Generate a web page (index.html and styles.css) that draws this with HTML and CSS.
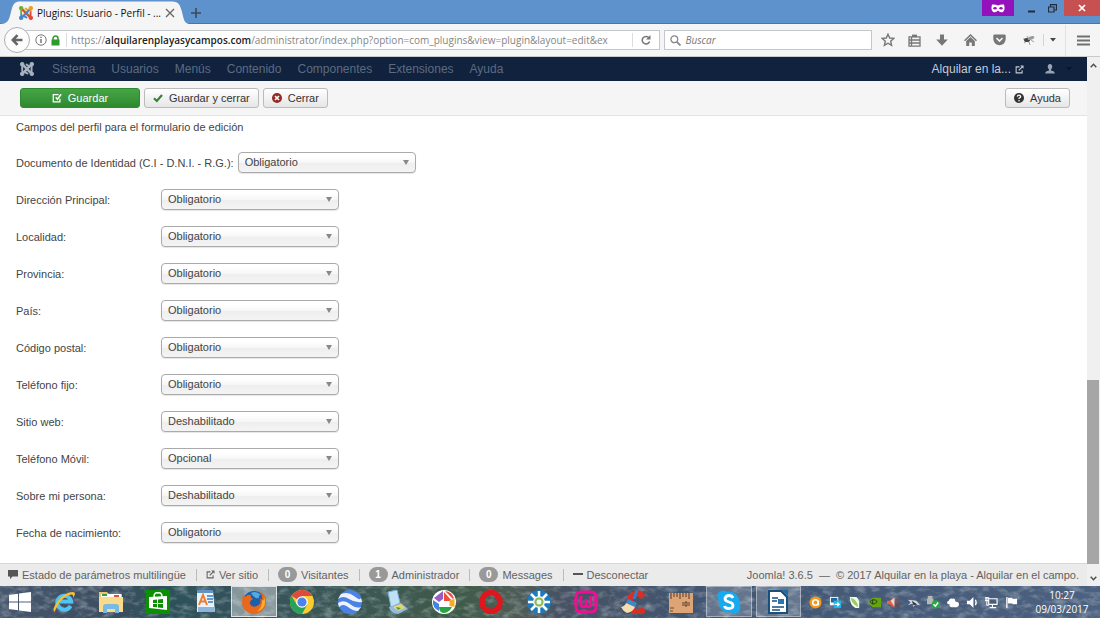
FILE: index.html
```html
<!DOCTYPE html>
<html lang="es">
<head>
  <meta charset="UTF-8">
  <meta name="viewport" content="width=device-width, initial-scale=1.0">
  <title>Plugins: Usuario - Perfil</title>
  <link rel="stylesheet" href="styles.css">
</head>
<body>
  <!-- Shared shapes -->
  <svg class="defs" aria-hidden="true">
    <symbol id="joomla" viewBox="0 0 16 16">
      <g fill="none" stroke-width="2.2" stroke-linecap="round" stroke-linejoin="round">
        <path class="j1" d="M2.5 8.5V5.5Q2.5 3.2 5 4.5L11.5 11"/>
        <path class="j2" d="M7.5 2.8L9.8 4.5M4.5 11L11 4.5Q13.2 3 13.4 6"/>
        <path class="j3" d="M13.2 7.5V10.5Q13 12.8 11 11.5L4.5 5"/>
        <path class="j4" d="M8.5 13.2L6.2 11.8M11.5 5L5 11.5Q2.8 13 2.6 10"/>
      </g>
      <circle class="j1" cx="2.5" cy="2.5" r="2.1" stroke="none"/>
      <circle class="j2" cx="13.5" cy="2.5" r="2.1" stroke="none"/>
      <circle class="j3" cx="13.5" cy="13.5" r="2.1" stroke="none"/>
      <circle class="j4" cx="2.5" cy="13.5" r="2.1" stroke="none"/>
    </symbol>
    <symbol id="external" viewBox="0 0 12 12">
      <path d="M6 2.5H1.5v8h8V7" fill="none" stroke="currentColor" stroke-width="1.4"/>
      <path d="M5 7.2L10 2.2" stroke="currentColor" stroke-width="1.6"/>
      <path d="M7 .8h4.3v4.3z" fill="currentColor"/>
    </symbol>
  </svg>

  <!-- Title bar -->
  <header class="titlebar">
    <div class="tab">
      <svg class="tab-shape" viewBox="0 0 190 24" preserveAspectRatio="none"><path d="M0 24C8 24 9 20 11 12C13 4 14 1.500 21 1.500H172C179 1.500 180 5 182 12C184 20 184 24 191 24z"/></svg>
      <svg class="icon-14 joomla-color"><use href="#joomla"/></svg>
      <span class="tab-title">Plugins: Usuario - Perfil - ...</span>
      <button class="plain" aria-label="Cerrar pestaña"><svg width="10" height="10" viewBox="0 0 10 10"><path d="M1 1l8 8M9 1L1 9" stroke="#666" stroke-width="1.3"/></svg></button>
    </div>
    <button class="plain new-tab" aria-label="Nueva pestaña"><svg width="10" height="10" viewBox="0 0 10 10"><path d="M5 0v10M0 5h10" stroke="#3c4a5c" stroke-width="1.6"/></svg></button>
    <div class="window-buttons">
      <span class="private"><svg width="14" height="9" viewBox="0 0 14 9"><path d="M1 .6Q4 0 7 1.500Q10 0 13 .6Q14.500 6 12 8Q9 9 7 6.500Q5 9 2 8Q-.5 6 1 .6z" fill="#fff"/><ellipse cx="4" cy="4.200" rx="1.700" ry="1.200" fill="#9312bb"/><ellipse cx="10" cy="4.200" rx="1.700" ry="1.200" fill="#9312bb"/></svg></span>
      <button class="plain" aria-label="Minimizar"><svg width="9" height="9" viewBox="0 0 9 9"><path d="M1 7.500h7" stroke="#222d3c" stroke-width="2"/></svg></button>
      <button class="plain" aria-label="Restaurar"><svg width="9" height="9" viewBox="0 0 9 9"><path d="M.5 3h5.500v5H.5zM2.500 3V.7h6v5.300H6" fill="none" stroke="#222d3c" stroke-width="1.200"/></svg></button>
      <button class="plain close" aria-label="Cerrar"><svg width="8" height="8" viewBox="0 0 8 8"><path d="M1 1l6 6M7 1L1 7" stroke="#fff" stroke-width="1.700"/></svg></button>
    </div>
  </header>

  <!-- Address bar -->
  <div class="navbar">
    <button class="back" aria-label="Atrás"><svg width="12" height="12" viewBox="0 0 12 12"><path d="M11.500 6H2M6.500 1.200L1.800 6l4.700 4.800" fill="none" stroke="#666" stroke-width="2.600"/></svg></button>
    <div class="url">
      <svg width="12" height="12" viewBox="0 0 12 12"><circle cx="6" cy="6" r="5.200" fill="none" stroke="#777"/><path d="M6 5v4M6 2.700v1.300" stroke="#666" stroke-width="1.300"/></svg>
      <svg width="9" height="11" viewBox="0 0 9 11"><path d="M2 5V3.500a2.500 2.500 0 0 1 5 0V5" fill="none" stroke="#2f9a2f" stroke-width="1.500"/><rect x=".5" y="4.500" width="8" height="6" fill="#2f9a2f"/></svg>
      <span class="url-text">https://<b>alquilarenplayasycampos.com</b>/administrator/index.php?option=com_plugins&amp;view=plugin&amp;layout=edit&amp;extension_id=4</span>
      <button class="plain reload" aria-label="Recargar"><svg width="10" height="10" viewBox="0 0 10 10"><path d="M8 2.800A3.800 3.800 0 1 0 8.600 6.500" fill="none" stroke="#777" stroke-width="1.500"/><path d="M9.500 0v4.500H5z" fill="#777"/></svg></button>
    </div>
    <label class="search">
      <svg width="11" height="11" viewBox="0 0 11 11"><circle cx="4.300" cy="4.300" r="3.400" fill="none" stroke="#888" stroke-width="1.300"/><path d="M6.800 6.800l3.700 3.700" stroke="#888" stroke-width="1.800"/></svg>
      <input type="text" placeholder="Buscar" aria-label="Buscar">
    </label>
    <div class="tools">
      <button class="plain" aria-label="Marcar"><svg width="14" height="14" viewBox="0 0 14 14"><path d="M7 1.200l1.700 3.800 4.200.4-3.200 2.800.9 4.100L7 10.200l-3.600 2.100.9-4.100L1.100 5.400l4.200-.4z" fill="none" stroke="#777" stroke-width="1.400"/></svg></button>
      <button class="plain" aria-label="Marcadores"><svg width="13" height="13" viewBox="0 0 13 13"><path d="M1 2.800h11v9.400H1zM3.500 3v9M1 6h11M1 9h11" fill="none" stroke="#777" stroke-width="1.300"/><path d="M4 .6h5v2.600H4z" fill="#777"/></svg></button>
      <button class="plain" aria-label="Descargas"><svg width="12" height="12" viewBox="0 0 12 12"><path d="M4 .5h4v5h3.800L6 11.800.2 5.500H4z" fill="#777"/></svg></button>
      <button class="plain" aria-label="Inicio"><svg width="13" height="12" viewBox="0 0 13 12"><path d="M.5 6.800L6.500 1l6 5.800" fill="none" stroke="#777" stroke-width="1.500"/><path d="M2.200 7L6.500 3l4.300 4v5H7.800V8.500H5.200V12h-3z" fill="#777"/></svg></button>
      <button class="plain" aria-label="Pocket"><svg width="13" height="12" viewBox="0 0 13 12"><path d="M1.500.5h10q1.200 0 1.200 1.200V5a6.200 6.200 0 0 1-12.400 0V1.700Q.3.500 1.500.5z" fill="#777"/><path d="M3.500 4l3 3 3-3" fill="none" stroke="#f5f5f5" stroke-width="1.700"/></svg></button>
      <button class="plain" aria-label="Firebug"><svg width="13" height="12" viewBox="0 0 13 12"><path d="M1 5l4 0M2 9l4-3M7 8l1 3M9 6l3 2M6 4L5 2" stroke="#888" stroke-width=".8"/><ellipse cx="5" cy="6" rx="3" ry="2" fill="#444"/><ellipse cx="9" cy="4" rx="3.500" ry="1.700" fill="#999" transform="rotate(-20 9 4)"/></svg></button>
      <button class="plain small" aria-label="Más"><svg width="6" height="4" viewBox="0 0 6 4"><path d="M0 0h6L3 3.500z" fill="#444"/></svg></button>
      <button class="plain menu" aria-label="Menú"><svg width="13" height="11" viewBox="0 0 13 11"><path d="M.5 1.500h12M.5 5.500h12M.5 9.500h12" stroke="#707070" stroke-width="2.200" stroke-linecap="round"/></svg></button>
    </div>
  </div>

  <div class="viewport">
    <div class="page">
      <!-- Joomla menu -->
      <nav class="admin-nav">
        <a href="#" class="brand" aria-label="Joomla"><svg class="icon-14 joomla-mono"><use href="#joomla"/></svg></a>
        <a href="#">Sistema</a>
        <a href="#">Usuarios</a>
        <a href="#">Menús</a>
        <a href="#">Contenido</a>
        <a href="#">Componentes</a>
        <a href="#">Extensiones</a>
        <a href="#">Ayuda</a>
        <a href="#" class="site">Alquilar en la... <svg width="9" height="9"><use href="#external"/></svg></a>
        <a href="#" class="user" aria-label="Usuario">
          <svg width="10" height="10" viewBox="0 0 10 10"><path d="M5 0a2.400 2.400 0 0 1 2.200 3Q7 4.700 6 5.500V6.500Q9.800 7 9.800 9.500H.2Q.2 7 4 6.500V5.500Q3 4.700 2.800 3A2.400 2.400 0 0 1 5 0z" fill="#9aa3b3"/></svg>
          <svg width="6" height="4" viewBox="0 0 6 4"><path d="M0 0h6L3 3.500z" fill="#0b1526"/></svg>
        </a>
      </nav>

      <!-- Toolbar -->
      <div class="toolbar">
        <button class="btn btn-success"><svg width="10" height="10" viewBox="0 0 12 12"><path d="M8 2H1.500v8.500h8V7" fill="none" stroke="#fff" stroke-width="1.500"/><path d="M4.500 5l2 2.500L11 1.500" fill="none" stroke="#fff" stroke-width="1.800"/></svg>Guardar</button>
        <button class="btn"><svg width="10" height="10" viewBox="0 0 10 10"><path d="M1 5.200l2.800 2.800L9 2" fill="none" stroke="#378137" stroke-width="2.200"/></svg>Guardar y cerrar</button>
        <button class="btn"><svg width="10" height="10" viewBox="0 0 10 10"><circle cx="5" cy="5" r="5" fill="#942a25"/><path d="M3 3l4 4M7 3L3 7" stroke="#fff" stroke-width="1.600"/></svg>Cerrar</button>
        <button class="btn help"><svg width="10" height="10" viewBox="0 0 10 10"><circle cx="5" cy="5" r="5" fill="#333"/><path d="M3.300 3.700Q3.500 2.200 5 2.200T6.700 3.600Q6.700 4.500 5 5.300V6" fill="none" stroke="#fff" stroke-width="1.300"/><circle cx="5" cy="7.700" r=".8" fill="#fff"/></svg>Ayuda</button>
      </div>

      <!-- Profile fields -->
      <form class="fields">
        <p>Campos del perfil para el formulario de edición</p>
        <div class="row"><label for="dni">Documento de Identidad (C.I - D.N.I. - R.G.):</label><span class="pick"><select id="dni"><option>Obligatorio</option></select></span></div>
        <div class="row"><label for="address">Dirección Principal:</label><span class="pick"><select id="address"><option>Obligatorio</option></select></span></div>
        <div class="row"><label for="city">Localidad:</label><span class="pick"><select id="city"><option>Obligatorio</option></select></span></div>
        <div class="row"><label for="region">Provincia:</label><span class="pick"><select id="region"><option>Obligatorio</option></select></span></div>
        <div class="row"><label for="country">País:</label><span class="pick"><select id="country"><option>Obligatorio</option></select></span></div>
        <div class="row"><label for="postal">Código postal:</label><span class="pick"><select id="postal"><option>Obligatorio</option></select></span></div>
        <div class="row"><label for="phone">Teléfono fijo:</label><span class="pick"><select id="phone"><option>Obligatorio</option></select></span></div>
        <div class="row"><label for="website">Sitio web:</label><span class="pick"><select id="website"><option>Deshabilitado</option></select></span></div>
        <div class="row"><label for="mobile">Teléfono Móvil:</label><span class="pick"><select id="mobile"><option>Opcional</option></select></span></div>
        <div class="row"><label for="about">Sobre mi persona:</label><span class="pick"><select id="about"><option>Deshabilitado</option></select></span></div>
        <div class="row"><label for="dob">Fecha de nacimiento:</label><span class="pick"><select id="dob"><option>Obligatorio</option></select></span></div>
      </form>

      <!-- Status bar -->
      <footer class="status">
        <a href="#"><svg width="10" height="9" viewBox="0 0 10 9"><path d="M0 0h10v6.500H4.500L2 9V6.500H0z" fill="#555"/></svg>Estado de parámetros multilingüe</a>
        <a href="#"><svg width="9" height="9"><use href="#external"/></svg>Ver sitio</a>
        <span class="item"><span class="badge">0</span>Visitantes</span>
        <span class="item"><span class="badge">1</span>Administrador</span>
        <a href="#"><span class="badge">0</span>Messages</a>
        <a href="#"><svg width="10" height="9" viewBox="0 0 10 9"><path d="M0 4h10" stroke="#555" stroke-width="2"/></svg>Desconectar</a>
        <span class="copy">Joomla! 3.6.5 &nbsp;—&nbsp; © 2017 Alquilar en la playa - Alquilar en el campo.</span>
      </footer>
    </div>
    <div class="scrollbar">
      <svg width="7" height="5" viewBox="0 0 7 5"><path d="M.7 4.300L3.500 1.300l2.800 3" fill="none" stroke="#505050" stroke-width="1.500"/></svg>
      <div class="track"><div class="thumb"></div></div>
      <svg width="7" height="5" viewBox="0 0 7 5"><path d="M.7 .7L3.500 3.700l2.800-3" fill="none" stroke="#505050" stroke-width="1.500"/></svg>
    </div>
  </div>

  <!-- Windows taskbar -->
  <footer class="taskbar">
    <svg class="wallpaper" aria-hidden="true">
      <filter id="rock"><feTurbulence type="fractalNoise" baseFrequency=".09 .16" numOctaves="4" seed="7"/><feColorMatrix values="0 0 0 0 .7  0 0 0 0 .76  0 0 0 0 .8  1.800 0 0 0 -.8"/></filter>
      <rect width="100%" height="100%" filter="url(#rock)" opacity=".5"/>
    </svg>
    <button class="plain start" aria-label="Inicio"><svg width="22" height="20" viewBox="0 0 22 20"><path d="M0 3l9-1.300V9.500H0zM10 1.500L22 0v9.500H10zM0 10.500h9v7.800L0 17zM10 10.500h12V20l-12-1.600z" fill="#fff"/></svg></button>
    <div class="apps">
      <button class="plain" aria-label="Internet Explorer"><svg viewBox="0 0 24 24"><path d="M18.500 16A7 7 0 1 1 19.200 11.500H8" fill="none" stroke="#50c5f3" stroke-width="4"/><path d="M3 22Q-1 20 6 11T21 2Q25 2 21 8Q22 3 17 5Q10 8 6 15T3 22z" fill="#fbc02d"/></svg></button>
      <button class="plain" aria-label="Explorador de archivos"><svg viewBox="0 0 24 24"><path d="M0 2h8l2 2h13v18H0z" fill="#e9c46f"/><path d="M2 4h20v4H2z" fill="#fff"/><path d="M3 4h5v2H3z" fill="#3a9a4b"/><path d="M15 5h5v2h-5z" fill="#d75540"/><path d="M0 7h24v15H0z" fill="#f8dc8c"/><path d="M4 23v-6q0-3 3-3h10q3 0 3 3v6h-4v-4H8v4z" fill="#79b9e5"/></svg></button>
      <button class="plain" aria-label="Tienda"><svg viewBox="0 0 24 24"><path d="M0 0h24v24H0z" fill="#0a9000"/><path d="M8 7q0-5 4-4q4-1 4 4" fill="none" stroke="#fff" stroke-width="1.500"/><path d="M3 7l18-1v14L3 18z" fill="#fff"/><path d="M7 10l4-.4V13H7zM12 9.500l5-.5v4h-5zM7 14h4v3.200L7 17zM12 14h5v4l-5-.6z" fill="#0a9000"/></svg></button>
      <button class="plain" aria-label="WordPad"><svg viewBox="0 0 24 24"><path d="M3 1h16l2 21H3z" fill="#e8f2fb"/><path d="M3 0h16v3H3z" fill="#5f93c7"/><path d="M5 15l4-10 4 10M6.500 11.500h5" fill="none" stroke="#ef7d2d" stroke-width="2"/><path d="M13 6h6M13 9h6M14 12h5" stroke="#3d7cc1" stroke-width="1.500"/><path d="M4 17h16l1 5H4z" fill="#8db6dc"/></svg></button>
      <button class="plain active light" aria-label="Firefox"><svg viewBox="0 0 24 24"><circle cx="12" cy="12" r="11" fill="#1d5fa8"/><path d="M9 3q5-3 10 2-3 0-2 3-5 1-8-5z" fill="#54a9df"/><path d="M1 4q0 2 2 3 3-3 6-2-1 3 2 4-4 2-3 5 2 4 7 2 5-2 3-8 3 3 2 0 0-5-3-7 7 3 7 10A12 12 0 0 1 0 13Q0 8 1 4z" fill="#e9681d"/><path d="M22 7q4 11-7 15 6-6 5-12 2 2 2-3z" fill="#f8ad2f"/></svg></button>
      <button class="plain" aria-label="Chrome"><svg viewBox="0 0 24 24"><circle cx="12" cy="12" r="12" fill="#fbcb2f"/><path d="M12 12L1.600 6A12 12 0 0 1 22.400 6H12z" fill="#dd4b3e"/><path d="M1.600 6A12 12 0 0 0 12 24l5-9-5-3-5 3z" fill="#28a15b"/><circle cx="12" cy="12" r="5.800" fill="#fff"/><circle cx="12" cy="12" r="4.600" fill="#4a83ed"/></svg></button>
      <button class="plain" aria-label="Google Earth"><svg viewBox="0 0 24 24"><circle cx="12" cy="12" r="12" fill="#4a83e5"/><path d="M3 4Q10 1 16 6T23 8L24 12Q17 13 11 9T0 9zM0 13Q6 9 12 14T23 17L20 21Q15 21 10 17T1 17z" fill="#eef3fb"/></svg></button>
      <button class="plain" aria-label="Escáner"><svg viewBox="0 0 24 24"><path d="M3 2l9-2 3 13-9 4z" fill="#bfe1f5" stroke="#7cb2d8"/><path d="M4 17l12-4 7 6-10 5Q5 23 4 17z" fill="#91bbe1"/><path d="M8 17l8-3 4 4-7 3z" fill="#e7d66a"/><path d="M11 17l5 1-3 2z" fill="#479656"/></svg></button>
      <button class="plain" aria-label="Picasa"><svg viewBox="0 0 24 24"><circle cx="12" cy="12" r="12" fill="#fff"/><path d="M11 1L2 8l5 4 4-3z" fill="#9a5bc4"/><path d="M13 1q7 1 9 7l-1 1z" fill="#e65143"/><path d="M12 2l8 9h-8z" fill="#ef4e3b"/><path d="M22.500 9v8l-5-1V10z" fill="#f5ad27"/><path d="M7 17h13q-3 6-9 6-4-1-4-6z" fill="#2aa344"/><path d="M1 10l6 4v7Q0 18 1 10z" fill="#4384de"/></svg></button>
      <button class="plain" aria-label="Opera"><svg viewBox="0 0 24 24"><ellipse cx="12" cy="12" rx="9" ry="9.500" fill="none" stroke="#e0161f" stroke-width="5.500"/></svg></button>
      <button class="plain" aria-label="Panel"><svg viewBox="0 0 24 24"><circle cx="12" cy="12" r="12" fill="#1f79bd"/><path d="M12 1v22M1 12h22M4 4l16 16M20 4L4 20" stroke="#fff" stroke-width="2.500"/><circle cx="12" cy="12" r="6" fill="#e8f5fb"/><circle cx="12" cy="12" r="3.500" fill="none" stroke="#8fb83d" stroke-width="2"/></svg></button>
      <button class="plain" aria-label="WampServer"><svg viewBox="0 0 24 24"><path d="M2 10V7q0-5 5-5h10q5 0 5 5v3M2 14v3q0 5 5 5h10q5 0 5-5v-3M0 10h4M20 10h4M0 14h4M20 14h4" fill="none" stroke="#f20c94" stroke-width="2.800"/><path d="M7 6v8q0 3 2.500 3T12 14V9v5q0 3 2.500 3T17 14V6" fill="none" stroke="#f20c94" stroke-width="2.600"/></svg></button>
      <button class="plain" aria-label="CCleaner"><svg viewBox="0 0 24 24"><path d="M22 7Q18 1 12 5T11 18t12 1" fill="none" stroke="#d92d25" stroke-width="6"/><path d="M16 0l-3 9" stroke="#2f7fc5" stroke-width="3"/><path d="M7 9l9 4-2 4-9-4z" fill="#388bce"/><path d="M5 13l9 4q-2 5-8 6-4-2-6-6 4-1 5-4z" fill="#f2dfad"/></svg></button>
      <button class="plain" aria-label="Regla"><svg viewBox="0 0 24 24"><path d="M0 3h24v20H0z" fill="#dda576"/><path d="M2 3v6M5 3v4M8 3v4M11 3v6M14 3v4M17 3v4M20 3v6M1 18h4M1 21h3" stroke="#72492e" stroke-width="1.200"/><path d="M14 12v4M16 12h2v4h-2zM20 12v4" fill="none" stroke="#60402a"/></svg></button>
      <button class="plain active" aria-label="Skype"><svg viewBox="0 0 24 24"><circle cx="12" cy="12" r="10.500" fill="#16aaf0"/><circle cx="6.500" cy="6.500" r="6" fill="#16aaf0"/><circle cx="17.500" cy="17.500" r="6" fill="#16aaf0"/><path d="M16 8Q15 5.500 12 5.500T8 8.500Q8 11 12 12T16 15.500Q16 18.500 12 18.500T7.500 16" fill="none" stroke="#fff" stroke-width="2.800"/></svg></button>
      <button class="plain active" aria-label="LibreOffice Writer"><svg viewBox="0 0 24 24"><path d="M3 1h12l6 6v16H3z" fill="#fff" stroke="#174f7d" stroke-width="2"/><path d="M16 0h6v6z" fill="#1c6ca6"/><path d="M6 8h6M6 11h5M6 17h12M6 20h8" stroke="#174f7d" stroke-width="1.600"/><path d="M12 9h6v5h-6z" fill="#2b75ae"/></svg></button>
    </div>
    <div class="tray">
      <svg viewBox="0 0 14 14"><circle cx="7" cy="7" r="6.500" fill="#f59a1b"/><circle cx="7" cy="7" r="3" fill="none" stroke="#fff" stroke-width="1.700"/><path d="M10 5v5" stroke="#fff" stroke-width="1.500"/></svg>
      <svg viewBox="0 0 14 14"><path d="M1 1h9v9H1z" fill="#fff"/><path d="M2 2h7v5H2z" fill="#24669d"/><path d="M5 5h8v8H5z" fill="#1db6e9"/><path d="M6 9h5M9 7l2 2-2 2" fill="none" stroke="#fff" stroke-width="1.300"/></svg>
      <svg viewBox="0 0 14 14"><path d="M2 1h7q4 2 3 12H8Q2 10 2 1z" fill="#f1faec"/><path d="M3 2q7 2 8 10Q4 9 3 2z" fill="#97cd61"/></svg>
      <svg viewBox="0 0 14 14"><path d="M0 6q4-4 5-4h9v10H5Q2 10 0 6z" fill="#65a313"/><path d="M2 6q4-4 8 0-4 5-8 0zM5 4v5" fill="none" stroke="#243912"/></svg>
      <svg viewBox="0 0 14 14"><path d="M0 5h3l5-4v12L3 9H0z" fill="#eb6345"/><path d="M4 5l4-3v9z" fill="#ddd"/><path d="M10 3q3 4 0 8M12 2q3 5 0 10" fill="none" stroke="#813e38"/></svg>
      <svg viewBox="0 0 14 14"><path d="M1 4l9 1 4 5-5-1-2 3-1-4-5 2 3-3z" fill="#d9dce1"/><path d="M5 5l6 4-4 1z" fill="#30343e"/></svg>
      <svg viewBox="0 0 14 14"><path d="M1 0h5v3H1zM0 3h7v6H0z" fill="#b5b8b8"/><circle cx="9.500" cy="9" r="4.500" fill="#28a743"/><path d="M7 9l2 2 3-4" fill="none" stroke="#fff" stroke-width="1.500"/></svg>
      <svg viewBox="0 0 14 14"><path d="M2 9Q0 6 3 5q1-3 4-2 3-1 3 3 4 0 4 3t-3 3H6Q3 12 4 9z" fill="#fff"/></svg>
      <svg viewBox="0 0 14 14"><path d="M1 5h3l4-4v12L4 9H1z" fill="#fff"/><path d="M10 4q2 3 0 6" fill="none" stroke="#fff" stroke-width="1.300"/></svg>
      <svg viewBox="0 0 14 14"><path d="M4 3h9v6H4zM8 9v3M5 12.500h7M2 1v4M0 2h4v3H0zM2 6v4h2" fill="none" stroke="#fff" stroke-width="1.200"/></svg>
      <svg viewBox="0 0 14 14"><path d="M2 1v12" stroke="#fff" stroke-width="1.400"/><path d="M3 2h5v1h5v6H8V8H3z" fill="#fff"/></svg>
    </div>
    <time class="clock">10:27<br>09/03/2017</time>
  </footer>
</body>
</html>
```

FILE: styles.css
```css
* {
  box-sizing: border-box;
}
body {
  margin: 0;
  height: 100vh;
  display: flex;
  flex-direction: column;
  overflow: hidden;
  font-family: "Liberation Sans", Arial, sans-serif;
  font-size: 11px;
  color: #444;
  background: #fff;
}
svg {
  flex: none;
}
a {
  text-decoration: none;
}
.defs {
  display: none;
}
.plain {
  display: flex;
  align-items: center;
  justify-content: center;
  padding: 0;
  border: 0;
  background: none;
}
.icon-14 {
  width: 14px;
  height: 14px;
}
.j1 { stroke: var(--j1); }
.j2 { stroke: var(--j2); }
.j3 { stroke: var(--j3); }
.j4 { stroke: var(--j4); }
circle.j1 { fill: var(--j1); }
circle.j2 { fill: var(--j2); }
circle.j3 { fill: var(--j3); }
circle.j4 { fill: var(--j4); }
.joomla-color {
  --j1: #6fae3d;
  --j2: #f29b26;
  --j3: #ea4335;
  --j4: #3f86cf;
}
.joomla-mono {
  --j1: #aab2bf;
  --j2: #aab2bf;
  --j3: #aab2bf;
  --j4: #aab2bf;
}

/* Title bar */
.titlebar {
  display: flex;
  align-items: flex-start;
  height: 24px;
  background: #5e92cc;
  border-bottom: 1px solid #4477ac;
  font-family: "Open Sans", "Noto Sans", sans-serif;
}
.tab {
  position: relative;
  display: flex;
  align-items: center;
  gap: 4px;
  width: 190px;
  height: 24px;
  padding: 2px 18px 0 19px;
  color: #111;
  font-size: 10px;
}
.tab > * {
  position: relative;
}
.tab .tab-shape {
  position: absolute;
  left: 0;
  top: 0;
  width: 100%;
  height: 100%;
  fill: #f5f5f5;
}
.tab-title {
  flex: 1;
  white-space: nowrap;
}
.new-tab {
  height: 26px;
  margin-left: 1px;
}
.window-buttons {
  display: flex;
  margin-left: auto;
}
.window-buttons > * {
  width: 21px;
  height: 16px;
}
.window-buttons .private {
  display: flex;
  align-items: center;
  justify-content: center;
  width: 32px;
  margin-right: 7px;
  background: #9312bb;
}
.window-buttons .close {
  width: 36px;
  margin-left: 1px;
  background: #c75050;
}

/* Address bar */
.navbar {
  display: flex;
  align-items: center;
  height: 33px;
  padding-left: 4px;
  background: #f5f5f5;
  border-bottom: 1px solid #c9c9c9;
  font-family: "Open Sans", "Noto Sans", sans-serif;
  font-size: 10px;
}
.back {
  position: relative;
  z-index: 1;
  display: flex;
  align-items: center;
  justify-content: center;
  width: 26px;
  height: 26px;
  padding: 0;
  border: 1px solid #a9b0b8;
  border-radius: 50%;
  background: #fcfcfc;
}
.url {
  display: flex;
  align-items: center;
  gap: 4px;
  flex: 645;
  min-width: 0;
  height: 20px;
  margin-left: -7px;
  padding-left: 11px;
  border: 1px solid #c3c6ca;
  background: #fff;
}
.url-text {
  flex: 1;
  min-width: 0;
  margin: 0 20px 0 2px;
  padding-left: 4px;
  border-left: 1px solid #ddd;
  overflow: hidden;
  white-space: nowrap;
  color: #858585;
}
.url-text b {
  font-weight: 600;
  color: #222;
}
.reload {
  width: 27px;
  height: 14px;
  border-left: 1px solid #ddd;
}
.search {
  display: flex;
  align-items: center;
  gap: 4px;
  flex: 202;
  min-width: 0;
  height: 20px;
  margin-left: 4px;
  padding: 0 5px;
  border: 1px solid #c3c6ca;
  background: #fff;
}
.search input {
  flex: 1;
  min-width: 0;
  padding: 0;
  border: 0;
  outline: 0;
  background: none;
  font: italic 10px "Open Sans", "Noto Sans", sans-serif;
}
.search input::placeholder {
  color: #777;
}
.tools {
  display: flex;
  align-items: center;
  padding-left: 2px;
}
.tools button {
  width: 29px;
  height: 31px;
}
.tools button:first-child {
  width: 28px;
}
.tools button:nth-child(2) {
  width: 25px;
}
.tools .small {
  width: 18px;
  height: 12px;
  border-left: 1px solid #d5d5d5;
}
.tools .menu {
  width: 35px;
  margin-left: 4px;
  border-left: 1px solid #e2e2e2;
}

/* Page and scrollbar */
.viewport {
  flex: 1;
  min-height: 0;
  display: flex;
}
.page {
  flex: 1;
  min-width: 0;
  display: flex;
  flex-direction: column;
}
.scrollbar {
  display: flex;
  flex-direction: column;
  align-items: center;
  width: 13px;
  padding: 6px 0 5px;
  background: #f0f0f0;
}
.track {
  flex: 1;
  display: flex;
  align-items: flex-end;
  width: 100%;
  padding: 0 1px 12px 0;
}
.thumb {
  width: 100%;
  height: 37%;
  background: #a6a6a6;
}

/* Joomla menu */
.admin-nav {
  display: flex;
  align-items: center;
  gap: 16px;
  height: 25px;
  padding: 0 15px 0 20px;
  background: #10223e;
  font-size: 12px;
}
.admin-nav a {
  display: flex;
  align-items: center;
  color: #5d6b80;
}
.admin-nav .brand {
  margin-right: 2px;
}
.admin-nav .site {
  gap: 4px;
  margin-left: auto;
  color: #c6ccd5;
}
.admin-nav .user {
  gap: 11px;
  margin-left: 5px;
}

/* Toolbar */
.toolbar {
  display: flex;
  align-items: center;
  gap: 4px;
  height: 35px;
  padding: 0 17px 0 20px;
  background: #f5f5f5;
  border-bottom: 1px solid #e3e3e3;
}
.btn {
  display: flex;
  align-items: center;
  justify-content: center;
  gap: 6px;
  height: 20px;
  padding: 0 8px;
  border: 1px solid #bbb;
  border-radius: 3px;
  background: linear-gradient(#fff, #e6e6e6);
  color: #333;
  font: 11px "Liberation Sans", Arial, sans-serif;
}
.btn-success {
  width: 120px;
  border-color: #2f8a2f;
  background: linear-gradient(#46a546, #2f8a2f);
  color: #fff;
}
.help {
  margin-left: auto;
}

/* Profile fields */
.fields {
  flex: 1;
  padding: 4px 16px;
}
.fields p {
  margin: 0 0 18px;
  line-height: 14px;
}
.row {
  display: flex;
  align-items: center;
  gap: 4px;
  height: 21px;
  margin-bottom: 16px;
}
.row label {
  min-width: 141px;
  padding-top: 2px;
}
.pick {
  position: relative;
  width: 178px;
}
.pick::after {
  content: "";
  position: absolute;
  right: 7px;
  top: 8px;
  border: 3px solid transparent;
  border-top: 5px solid #888;
  border-bottom: 0;
  pointer-events: none;
}
.pick select {
  display: block;
  width: 100%;
  height: 21px;
  padding: 0 20px 0 6px;
  border: 1px solid #aaa;
  border-radius: 4px;
  appearance: none;
  background: linear-gradient(#fff 20%, #f6f6f6 50%, #eee 52%, #f4f4f4);
  box-shadow: 0 1px 1px rgba(0, 0, 0, 0.1);
  color: #444;
  font: 11px "Liberation Sans", Arial, sans-serif;
}

/* Status bar */
.status {
  display: flex;
  align-items: center;
  height: 24px;
  padding: 0 8px;
  background: #ebebeb;
  border-top: 1px solid #d8d8d8;
  color: #626262;
}
.status a,
.status .item {
  display: flex;
  align-items: center;
  gap: 4px;
  color: #626262;
}
.status a + a,
.status a + .item,
.status .item + .item,
.status .item + a {
  margin-left: 10px;
  padding-left: 10px;
  background: linear-gradient(#bbb, #bbb) left / 1px 12px no-repeat;
}
.badge {
  width: 19px;
  height: 15px;
  border-radius: 8px;
  background: #999;
  color: #fff;
  font-size: 10px;
  font-weight: bold;
  line-height: 15px;
  text-align: center;
}
.copy {
  margin-left: auto;
}

/* Windows taskbar */
.taskbar {
  position: relative;
  display: flex;
  align-items: center;
  height: 32px;
  background: linear-gradient(90deg, #46566c, #3c4d61 10%, #2d5159 15%, #34525c 22%, #3b5753 32%, #405a49 42%, #4e5c56 47%, #475263 51%, #415672 65%, #4c6180);
}
.taskbar > * {
  position: relative;
}
.taskbar .wallpaper {
  position: absolute;
  left: 0;
  top: 0;
  width: 100%;
  height: 100%;
}
.start {
  width: 40px;
  height: 32px;
}
.apps {
  display: flex;
  flex: 770;
  gap: 4px;
  padding: 0 2px;
}
.apps button {
  flex: 1;
  height: 32px;
}
.apps svg {
  width: 24px;
  height: 24px;
}
.apps .active {
  height: 31px;
  border: 1px solid rgba(255, 255, 255, 0.4);
  background: rgba(255, 255, 255, 0.18);
}
.apps .light {
  border-color: rgba(255, 255, 255, 0.7);
  background: rgba(255, 255, 255, 0.4);
}
.tray {
  display: flex;
  flex: 212;
  justify-content: space-between;
  padding: 0 6px;
}
.tray svg {
  width: 13px;
  height: 13px;
}
.clock {
  width: 76px;
  color: #fff;
  font: 10px/14px "Open Sans", "Noto Sans", sans-serif;
  text-align: center;
}
```
